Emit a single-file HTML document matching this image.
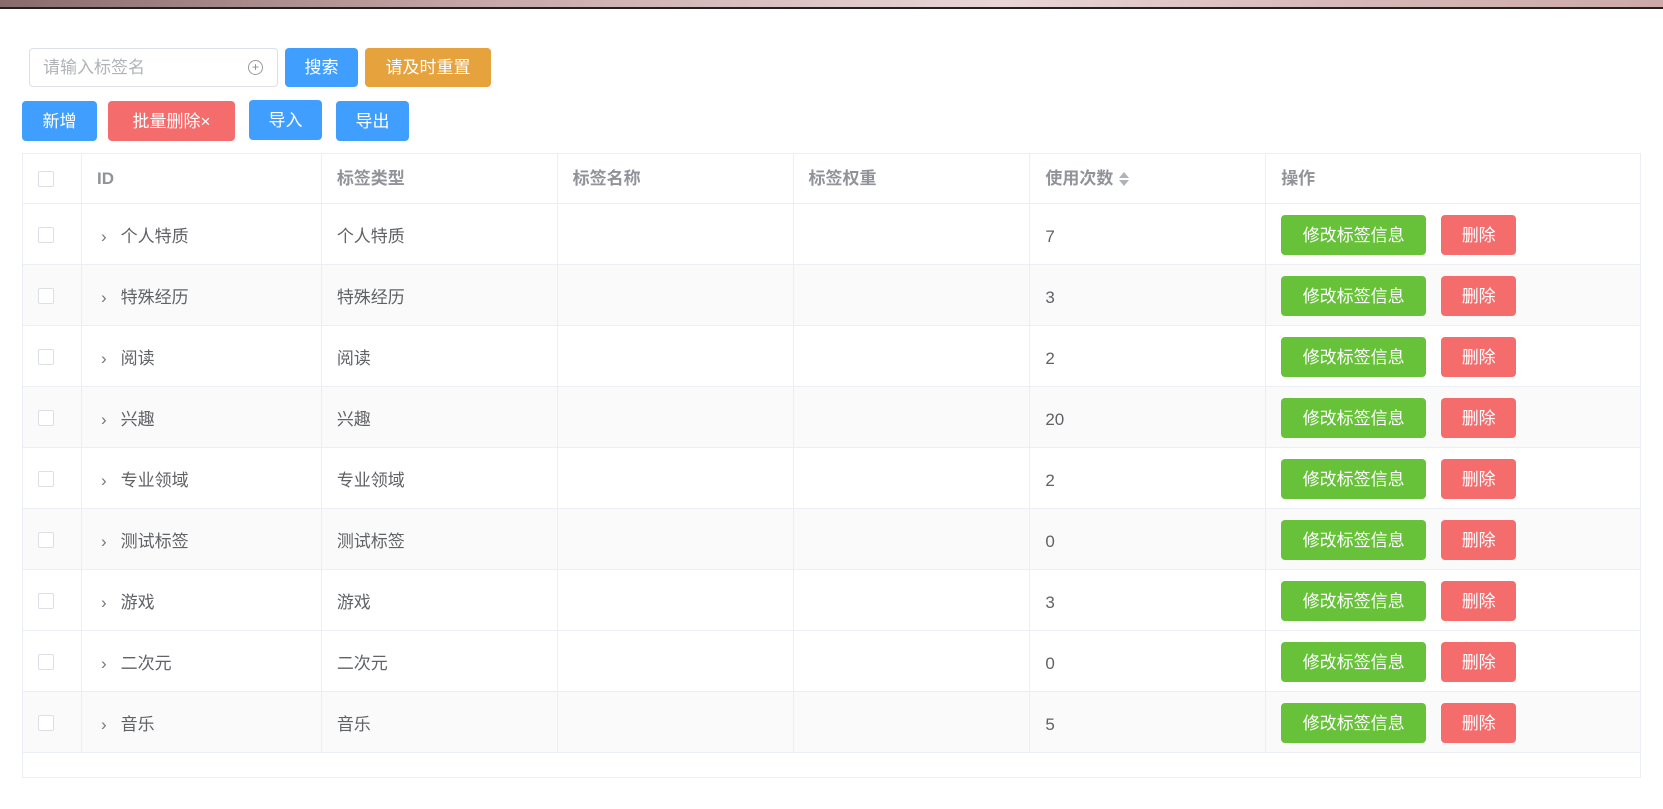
<!DOCTYPE html>
<html><head><meta charset="utf-8"><style>
*{box-sizing:border-box;margin:0;padding:0}
body{width:1663px;height:809px;background:#fff;font-family:"Liberation Sans","Noto Sans CJK SC",sans-serif;position:relative;overflow:hidden;color:#606266}
.top{position:absolute;left:0;top:0;width:1663px;height:9px;background:linear-gradient(90deg,#8a6b6b,#c9a9a9 30%,#e8d6d6 60%,#d8b8b8 80%,#caa);border-bottom:2px solid #222}
.btn{position:absolute;color:#fff;border-radius:4px;font-size:17px;display:flex;align-items:center;justify-content:center;line-height:1}
.blue{background:#409eff}.org{background:#e6a23c}.red{background:#f56c6c}.green{background:#67c23a}
.input{position:absolute;left:29px;top:48px;width:249px;height:39px;border:1px solid #dcdfe6;border-radius:4px;font-size:17px;color:#b0b3b8;padding-left:13px;line-height:37px}
.input .ic{position:absolute;right:14px;top:11px;width:15px;height:15px;border:1px solid #999;border-radius:50%;font-size:12px;line-height:13px;text-align:center;color:#888}
table{position:absolute;left:22px;top:153px;width:1619px;border-collapse:collapse;font-size:17px}
td,th{border:1px solid #ebeef5;text-align:left;padding-left:15px;position:relative;vertical-align:middle;line-height:20px}
th{height:50px;color:#909399;font-weight:bold}
td{height:61px;padding-top:5px}
tr.s td{background:#fafafa}
.cb{display:inline-block;width:16px;height:16px;border:1px solid #dcdfe6;border-radius:2px;background:#fff;vertical-align:middle}
td .cb{margin-top:-5px}
.ar{display:inline-block;color:#777;margin:0 14px 0 4px;font-size:17px}
.tb{position:absolute;top:11px;height:40px}
.sort{display:inline-block;vertical-align:middle;margin-left:6px;width:10px;height:16px;position:relative}
.sort:before,.sort:after{content:"";position:absolute;left:0;border-left:5px solid transparent;border-right:5px solid transparent}
.sort:before{top:1px;border-bottom:6px solid #b0b3b8}
.sort:after{bottom:1px;border-top:6px solid #b0b3b8}
</style></head><body>
<div class="top"></div>
<div class="input">请输入标签名<span class="ic">+</span></div>
<div class="btn blue" style="left:285px;top:48px;width:73px;height:39px">搜索</div>
<div class="btn org" style="left:365px;top:48px;width:126px;height:39px">请及时重置</div>
<div class="btn blue" style="left:22px;top:101px;width:75px;height:40px">新增</div>
<div class="btn red" style="left:108px;top:101px;width:127px;height:40px">批量删除×</div>
<div class="btn blue" style="left:249px;top:100px;width:73px;height:40px">导入</div>
<div class="btn blue" style="left:336px;top:101px;width:73px;height:40px">导出</div>
<table>
<colgroup><col style="width:59px"><col style="width:240px"><col style="width:236px"><col style="width:236px"><col style="width:237px"><col style="width:236px"><col style="width:375px"></colgroup>
<tr><th><span class="cb"></span></th><th>ID</th><th>标签类型</th><th>标签名称</th><th>标签权重</th><th>使用次数<span class="sort"></span></th><th>操作</th></tr>
<tr><td><span class="cb"></span></td><td><span class="ar">›</span>个人特质</td><td>个人特质</td><td></td><td></td><td>7</td><td><div class="btn green tb" style="left:15px;width:145px">修改标签信息</div><div class="btn red tb" style="left:175px;width:75px">删除</div></td></tr>
<tr class="s"><td><span class="cb"></span></td><td><span class="ar">›</span>特殊经历</td><td>特殊经历</td><td></td><td></td><td>3</td><td><div class="btn green tb" style="left:15px;width:145px">修改标签信息</div><div class="btn red tb" style="left:175px;width:75px">删除</div></td></tr>
<tr><td><span class="cb"></span></td><td><span class="ar">›</span>阅读</td><td>阅读</td><td></td><td></td><td>2</td><td><div class="btn green tb" style="left:15px;width:145px">修改标签信息</div><div class="btn red tb" style="left:175px;width:75px">删除</div></td></tr>
<tr class="s"><td><span class="cb"></span></td><td><span class="ar">›</span>兴趣</td><td>兴趣</td><td></td><td></td><td>20</td><td><div class="btn green tb" style="left:15px;width:145px">修改标签信息</div><div class="btn red tb" style="left:175px;width:75px">删除</div></td></tr>
<tr><td><span class="cb"></span></td><td><span class="ar">›</span>专业领域</td><td>专业领域</td><td></td><td></td><td>2</td><td><div class="btn green tb" style="left:15px;width:145px">修改标签信息</div><div class="btn red tb" style="left:175px;width:75px">删除</div></td></tr>
<tr class="s"><td><span class="cb"></span></td><td><span class="ar">›</span>测试标签</td><td>测试标签</td><td></td><td></td><td>0</td><td><div class="btn green tb" style="left:15px;width:145px">修改标签信息</div><div class="btn red tb" style="left:175px;width:75px">删除</div></td></tr>
<tr><td><span class="cb"></span></td><td><span class="ar">›</span>游戏</td><td>游戏</td><td></td><td></td><td>3</td><td><div class="btn green tb" style="left:15px;width:145px">修改标签信息</div><div class="btn red tb" style="left:175px;width:75px">删除</div></td></tr>
<tr><td><span class="cb"></span></td><td><span class="ar">›</span>二次元</td><td>二次元</td><td></td><td></td><td>0</td><td><div class="btn green tb" style="left:15px;width:145px">修改标签信息</div><div class="btn red tb" style="left:175px;width:75px">删除</div></td></tr>
<tr class="s"><td><span class="cb"></span></td><td><span class="ar">›</span>音乐</td><td>音乐</td><td></td><td></td><td>5</td><td><div class="btn green tb" style="left:15px;width:145px">修改标签信息</div><div class="btn red tb" style="left:175px;width:75px">删除</div></td></tr>
<tr><td colspan="7" style="height:25px;padding:0"></td></tr>
</table>
</body></html>
